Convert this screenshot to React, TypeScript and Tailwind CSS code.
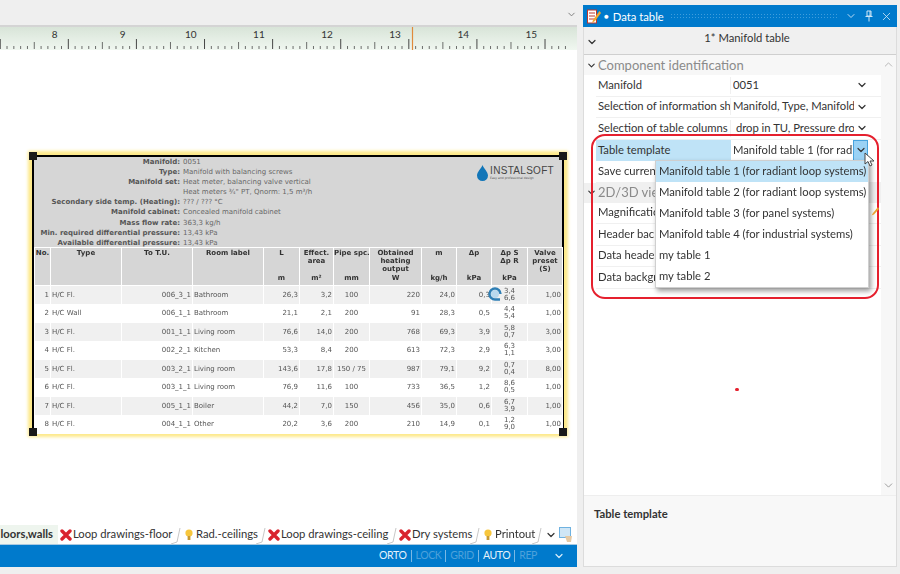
import { ChevronDown, ChevronUp, X } from "lucide-react";

const UI_FONT = "font-['Lato','Open_Sans',sans-serif]";

const INFO = [
  ["Manifold:", "0051"],
  ["Type:", "Manifold with balancing screws"],
  ["Manifold set:", "Heat meter, balancing valve vertical"],
  ["", "Heat meters ¾\" PT, Qnorm: 1,5 m³/h"],
  ["Secondary side temp. (Heating):", "??? / ??? °C"],
  ["Manifold cabinet:", "Concealed manifold cabinet"],
  ["Mass flow rate:", "363,3 kg/h"],
  ["Min. required differential pressure:", "13,43 kPa"],
  ["Available differential pressure:", "13,43 kPa"],
];

const HEADERS = [
  { title: "No.", unit: "", w: "w-[16px]" },
  { title: "Type", unit: "", w: "w-[71px]" },
  { title: "To T.U.", unit: "", w: "w-[71px]" },
  { title: "Room label", unit: "", w: "w-[71px]" },
  { title: "L", unit: "m", w: "w-[36px]" },
  { title: "Effect.\narea", unit: "m²", w: "w-[34px]" },
  { title: "Pipe spc.", unit: "mm", w: "w-[36px]" },
  { title: "Obtained\nheating\noutput", unit: "W", w: "w-[52px]" },
  { title: "m", unit: "kg/h", w: "w-[35px]" },
  { title: "Δp", unit: "kPa", w: "w-[35px]" },
  { title: "Δp S\nΔp R", unit: "kPa", w: "w-[36px]" },
  { title: "Valve\npreset\n(S)", unit: "", w: "w-[35px]" },
];

const ROWS = [
  ["1", "H/C Fl.", "006_3_1", "Bathroom", "26,3", "3,2", "100", "220", "24,0", "0,3", "3,4", "6,6", "1,00"],
  ["2", "H/C Wall", "006_1_1", "Bathroom", "21,1", "2,1", "200", "91", "28,3", "0,5", "4,4", "5,4", "1,00"],
  ["3", "H/C Fl.", "001_1_1", "Living room", "76,6", "14,0", "200", "768", "69,3", "3,9", "5,8", "0,7", "3,00"],
  ["4", "H/C Fl.", "002_2_1", "Kitchen", "53,3", "8,4", "200", "613", "72,3", "2,9", "6,3", "1,1", "3,00"],
  ["5", "H/C Fl.", "003_2_1", "Living room", "143,6", "17,8", "150 / 75", "987", "79,1", "9,2", "0,7", "0,4", "8,00"],
  ["6", "H/C Fl.", "003_1_1", "Living room", "76,9", "11,6", "100", "733", "36,5", "1,2", "8,6", "0,5", "1,00"],
  ["7", "H/C Fl.", "005_1_1", "Boiler", "44,2", "7,0", "150", "456", "35,0", "0,6", "6,7", "3,9", "1,00"],
  ["8", "H/C Fl.", "004_1_1", "Other", "20,2", "3,6", "200", "210", "14,9", "0,1", "1,2", "9,0", "1,00"],
];

const PROPS_TOP = [
  { name: "Manifold", value: "0051" },
  { name: "Selection of information sheet", value: "Manifold, Type, Manifold set" },
  { name: "Selection of table columns", value: " drop in TU, Pressure drop" },
];

const PROPS_BOTTOM = ["Magnification", "Header background", "Data header", "Data background"];

const OPTIONS = [
  "Manifold table 1 (for radiant loop systems)",
  "Manifold table 2 (for radiant loop systems)",
  "Manifold table 3 (for panel systems)",
  "Manifold table 4 (for industrial systems)",
  "my table 1",
  "my table 2",
];

function Ruler() {
  const ticks = [];
  for (let i = -8; i < 76; i++) {
    const x = 0.1 + i * 6.81;
    const major = (i + 8) % 10 === 0;
    const half = (i + 8) % 5 === 0;
    const y1 = major ? 12 : half ? 15 : 19;
    ticks.push(<line key={i} x1={x} x2={x} y1={y1} y2="22" stroke="#333" strokeWidth={major ? 0.9 : 0.7} />);
  }
  const labels = [8, 9, 10, 11, 12, 13, 14, 15];
  return (
    <div className="relative h-[23px] bg-gradient-to-b from-[#d8e4d8] to-[#f0f7f0] overflow-hidden">
      <svg width="577" height="23" className="block">
        <g transform="translate(54.6 0)">{ticks}</g>
        <line x1="412.5" x2="412.5" y1="0" y2="23" stroke="#e08a3c" strokeWidth="1.2" />
      </svg>
      {labels.map((n, i) => (
        <span
          key={n}
          style={{ left: 54.6 + i * 68.1 - 12 }}
          className="absolute top-[1px] w-6 text-center text-[10px] leading-[12px] text-[#333]"
        >
          {n}
        </span>
      ))}
    </div>
  );
}

function Logo() {
  return (
    <div className="flex items-center gap-[2px]">
      <svg width="11" height="16" viewBox="0 0 11 16">
        <path d="M5.5 0 C6.5 3 11 7 11 10.5 A5.5 5.5 0 0 1 0 10.5 C0 7 4.5 3 5.5 0Z" fill="#1276b8" />
      </svg>
      <div className="flex flex-col">
        <span className="text-[10px] leading-[10px] tracking-[0.3px] text-[#444] font-['Liberation_Sans',sans-serif]">INSTALSOFT</span>
        <span className="text-[3px] leading-[4px] text-[#555] whitespace-nowrap">Easy and professional design</span>
      </div>
    </div>
  );
}

function PaperTable() {
  return (
    <div className="relative ml-[32px] mt-[105px] w-[532px] h-[278px] border-2 border-black bg-white shadow-[0_0_3px_4px_#fde98a] font-['DejaVu_Sans',sans-serif]">
      <div className="blur-[0.4px]">
        <div className="relative h-[90px] bg-[#d6d6d6] text-[7px] leading-[10.1px] text-[#666]">
          {INFO.map(([label, value], i) => (
            <div key={i} className="flex">
              <span className="w-[146px] text-right font-bold text-[#555] whitespace-nowrap">{label}</span>
              <span className="ml-[3px] whitespace-nowrap">{value}</span>
            </div>
          ))}
          <div className="absolute right-[8px] top-[8px]">
            <Logo />
          </div>
        </div>
        <table className="w-[528px] table-fixed border-collapse text-[7px] leading-[8px]">
          <colgroup>
            {HEADERS.map((h) => (
              <col key={h.title} className={h.w} />
            ))}
          </colgroup>
          <thead>
            <tr className="h-[38px]">
              {HEADERS.map((h) => (
                <th key={h.title} className="relative border border-white bg-[#d6d6d6] align-top p-0 pt-[1px] font-bold text-[#333] whitespace-pre">
                  {h.title}
                  {h.unit && <span className="absolute left-0 right-0 bottom-[3px]">{h.unit}</span>}
                </th>
              ))}
            </tr>
          </thead>
          <tbody>
            {ROWS.map((r, i) => (
              <tr key={r[0]} className={i % 2 === 0 ? "h-[18.5px] bg-[#f0f0f0] text-[#555]" : "h-[18.5px] bg-white text-[#555]"}>
                <td className="border-x border-white p-0 pr-[1px] text-right">{r[0]}</td>
                <td className="border-x border-white p-0 pl-[1px]">{r[1]}</td>
                <td className="border-x border-white p-0 pr-[1px] text-right">{r[2]}</td>
                <td className="border-x border-white p-0 pl-[1px]">{r[3]}</td>
                <td className="border-x border-white p-0 pr-[1px] text-right">{r[4]}</td>
                <td className="border-x border-white p-0 pr-[1px] text-right">{r[5]}</td>
                <td className="border-x border-white p-0 text-center">{r[6]}</td>
                <td className="border-x border-white p-0 pr-[1px] text-right">{r[7]}</td>
                <td className="border-x border-white p-0 pr-[1px] text-right">{r[8]}</td>
                <td className="border-x border-white p-0 pr-[1px] text-right">{r[9]}</td>
                <td className="border-x border-white p-0 text-center leading-[7px]">
                  {r[10]}
                  <br />
                  {r[11]}
                </td>
                <td className="border-x border-white p-0 pr-[1px] text-right">{r[12]}</td>
              </tr>
            ))}
          </tbody>
        </table>
      </div>
      <span className="absolute -left-[5px] -top-[5px] h-2 w-2 bg-[#1a1a1a]" />
      <span className="absolute -right-[5px] -top-[5px] h-2 w-2 bg-[#1a1a1a]" />
      <span className="absolute -left-[5px] -bottom-[5px] h-2 w-2 bg-[#1a1a1a]" />
      <span className="absolute -right-[5px] -bottom-[5px] h-2 w-2 bg-[#1a1a1a]" />
      <svg width="16" height="16" viewBox="0 0 16 16" fill="none" className="absolute left-[453px] top-[129px]">
        <circle cx="8" cy="8" r="4" fill="#b9d9ee" />
        <path d="M13.5 8 A5.5 5.5 0 1 0 8 13.5 H13" stroke="#2f7fb5" strokeWidth="2.4" />
      </svg>
    </div>
  );
}

function RedX() {
  return (
    <svg width="12" height="12" viewBox="0 0 12 12">
      <path d="M2 2 L10 10 M10 2 L2 10" stroke="#d9232e" strokeWidth="3.4" strokeLinecap="round" />
    </svg>
  );
}

function Bulb() {
  return (
    <svg width="8" height="12" viewBox="0 0 8 12">
      <circle cx="4" cy="4" r="3.6" fill="#f7c63c" />
      <rect x="2.6" y="7" width="2.8" height="4" fill="#c89a30" />
    </svg>
  );
}

function Tab({ icon, label, w }: { icon: React.ReactNode; label: string; w: string }) {
  return (
    <div className={`relative flex h-full items-center gap-[1px] pl-[2px] ${w}`}>
      <span className="flex w-[12px] shrink-0 justify-center">{icon}</span>
      <span className="text-[11.25px] text-[#333] whitespace-nowrap">{label}</span>
      <svg width="10" height="20" className="absolute right-0 top-0">
        <path d="M0 19 L6 17 L9 3" stroke="#c8c8c8" fill="none" />
      </svg>
    </div>
  );
}

function TabBar() {
  return (
    <div className="flex h-[20px] items-center border-b border-[#a9c9e0] bg-white">
      <div className="flex h-full w-[58px] items-center justify-end bg-[#eef5ee] pr-[5px] text-[11.25px] font-bold text-[#333] overflow-hidden">
        <span className="whitespace-nowrap">loors,walls</span>
      </div>
      <Tab w="w-[123px]" icon={<RedX />} label="Loop drawings-floor" />
      <Tab w="w-[85px]" icon={<Bulb />} label="Rad.-ceilings" />
      <Tab w="w-[131px]" icon={<RedX />} label="Loop drawings-ceiling" />
      <Tab w="w-[83px]" icon={<RedX />} label="Dry systems" />
      <Tab w="w-[62px]" icon={<Bulb />} label="Printout" />
      <ChevronDown size={12} strokeWidth={2.4} className="ml-[3px] text-[#333]" />
      <svg width="14" height="16" viewBox="0 0 14 16" className="ml-[2px]">
        <rect x="0.5" y="0.5" width="11" height="10" fill="#cfe6f6" stroke="#6fb2e0" />
        <path d="M6 9 L13 9 L12 15 L8 15Z" fill="#e5c9a4" />
      </svg>
    </div>
  );
}

function StatusBar() {
  const items = [
    ["ORTO", true],
    ["LOCK", false],
    ["GRID", false],
    ["AUTO", true],
    ["REP", false],
  ] as const;
  return (
    <div className="flex h-[22px] items-center justify-end bg-[#007acc] pr-[12px] text-[10.5px] tracking-[-0.4px]">
      {items.map(([label, on], i) => (
        <div key={label} className="flex items-center">
          {i > 0 && <span className="mx-[4px] h-[12px] w-px bg-[#7ab8e4]" />}
          <span className={on ? "text-[#e6f2fb]" : "text-[#4ea1da]"}>{label}</span>
        </div>
      ))}
      <ChevronDown size={12} strokeWidth={2.4} className="ml-[16px] text-[#d8ecfa]" />
    </div>
  );
}

function PropRow({ name, value }: { name: string; value: string }) {
  return (
    <div className="flex h-[21.5px] items-center border-b border-[#f0f0f0] bg-white">
      <div className="w-[135px] shrink-0 overflow-hidden whitespace-pre px-[2px] text-[11.25px] text-[#333] border-r border-[#f0f0f0]">{name}</div>
      <div className="ml-[2px] w-[121px] overflow-hidden whitespace-pre text-[11.25px] text-[#333]">{value}</div>
      {value && <ChevronDown size={12} strokeWidth={2.4} className="ml-[2px] shrink-0 text-[#333]" />}
    </div>
  );
}

function DataPanel() {
  return (
    <div className="relative mt-[5px] ml-[6px] flex h-[562px] w-[314px] flex-col border-x border-b border-[#dcdcdc] bg-white">
      <div className="flex h-[22px] shrink-0 items-center bg-[#007acc] pl-[4px] pr-[4px] -mx-px">
        <svg width="14" height="15" viewBox="0 0 14 15">
          <rect x="0.5" y="1" width="9" height="13" fill="#fff" stroke="#c0392b" />
          <path d="M2 4h6M2 7h6M2 10h6" stroke="#c0392b" />
          <path d="M12.5 2 L6 11 L5 14 L8 12 L14 4Z" fill="#f0a830" />
        </svg>
        <span className="ml-[3px] text-[8px] text-white">●</span>
        <span className="ml-[4px] pt-[2px] text-[11.25px] text-white whitespace-nowrap">Data table</span>
        <div className="mx-[6px] h-[7px] flex-1 bg-[radial-gradient(#3f9ddc_1px,transparent_1px)] bg-[length:3px_3px]" />
        <ChevronDown size={12} strokeWidth={2} className="text-[#bcdcf3]" />
        <svg width="10" height="12" viewBox="0 0 10 12" className="ml-[7px]" fill="none">
          <path d="M3 1h4v5H3zM1.5 6.5h7M5 7v4.5M6 1v5" stroke="#cfe6f6" />
        </svg>
        <X size={13} strokeWidth={1.5} className="ml-[6px] text-[#cfe6f6]" />
      </div>
      <div className="relative flex h-[28px] shrink-0 justify-center border-b border-[#cfcfcf] bg-[#f0f0f0] pl-[14px] pt-[3px] text-[11.25px] text-[#333]">
        1* Manifold table
        <ChevronDown size={12} strokeWidth={2.4} className="absolute left-[2px] top-[9px]" />
      </div>
      <div className="flex flex-1">
        <div className="w-[298px]">
          <div className="flex h-[20px] items-center bg-[#f7f7f7] pl-[1px] pt-[1px] text-[13px] text-[#8a8a8a]">
            <ChevronDown size={11} strokeWidth={2.4} className="ml-[1px] mr-[1px] text-[#333]" />
            Component identification
          </div>
          <div className="ml-[12px]">
            {PROPS_TOP.map((p) => (
              <PropRow key={p.name} name={p.name} value={p.value} />
            ))}
            <div className="flex h-[21.5px] items-center bg-white">
              <div className="h-full w-[135px] shrink-0 bg-[#bfe3f7] px-[2px] text-[11.25px] leading-[20px] text-[#333]">Table template</div>
              <div className="ml-[2px] w-[120px] overflow-hidden whitespace-pre text-[11.25px] text-[#333]">Manifold table 1 (for radiant</div>
              <div className="flex h-[21px] w-[15px] shrink-0 items-center justify-center border border-[#47a3de] bg-[#9ad2f5]">
                <ChevronDown size={12} strokeWidth={2.4} className="text-[#333]" />
              </div>
            </div>
            <PropRow name="Save current template" value="" />
          </div>
          <div className="flex h-[20px] items-center bg-[#f0f0f0] pl-[1px] text-[13px] text-[#8a8a8a]">
            <ChevronDown size={11} strokeWidth={2.4} className="ml-[1px] mr-[1px] text-[#333]" />
            2D/3D view
          </div>
          <div className="ml-[12px]">
            {PROPS_BOTTOM.map((n) => (
              <PropRow key={n} name={n} value="" />
            ))}
          </div>
        </div>
        <div className="flex w-[15px] flex-col items-center justify-between bg-[#f7f7f7] py-[3px]">
          <ChevronUp size={13} strokeWidth={1.5} className="text-[#aaa]" />
          <ChevronDown size={13} strokeWidth={1.5} className="text-[#888]" />
        </div>
      </div>
      <div className="h-[71px] shrink-0 border-t border-[#eeeeee] bg-[#f8f8f8] pl-[10px] pt-[10px] text-[11.25px] font-bold text-[#333]">
        Table template
      </div>

      <div className="absolute left-[71px] top-[155px] w-[214px] border border-[#cfcfcf] bg-white shadow-[2px_3px_5px_rgba(0,0,0,0.4)]">
        {OPTIONS.map((o, i) => (
          <div
            key={o}
            className={i === 0 ? "flex h-[21px] items-center bg-[#bfe3f7] pl-[3px] text-[11.25px] text-[#333] whitespace-nowrap" : "flex h-[21px] items-center pl-[3px] text-[11.25px] text-[#333] whitespace-nowrap"}
          >
            {o}
          </div>
        ))}
      </div>
      <div className="pointer-events-none absolute left-[7px] top-[129px] h-[165px] w-[288px] rounded-[14px] border-2 border-[#e5202e]" />
      <svg width="12" height="16" viewBox="0 0 12 16" className="absolute left-[280px] top-[147px]">
        <path d="M1 1 L1 12 L4 9.5 L6 14 L8 13 L6 9 L10 9Z" fill="#fff" stroke="#444" />
      </svg>
      <svg width="8" height="10" viewBox="0 0 8 10" className="absolute left-[287px] top-[201px]">
        <path d="M7 1 L2 7 L0.5 9.5 L3 8.5 L8 3Z" fill="#e8a030" />
      </svg>
      <span className="absolute left-[151px] top-[383px] h-[3px] w-[4px] rounded-full bg-[#e5202e]" />
    </div>
  );
}

export default function App() {
  return (
    <div className={`flex h-[574px] w-[900px] overflow-hidden bg-[#efefef] ${UI_FONT}`}>
      <div className="flex w-[577px] shrink-0 flex-col">
        <div className="flex h-[25px] shrink-0 items-end justify-end bg-[#efefef] pb-[5px]">
          <ChevronDown size={11} strokeWidth={2} className="text-[#777]" />
        </div>
        <div className="h-[2px] shrink-0 bg-[#d4d4d4]" />
        <Ruler />
        <div className="h-[475px] shrink-0 overflow-hidden bg-white">
          <PaperTable />
        </div>
        <TabBar />
        <StatusBar />
      </div>
      <DataPanel />
    </div>
  );
}
